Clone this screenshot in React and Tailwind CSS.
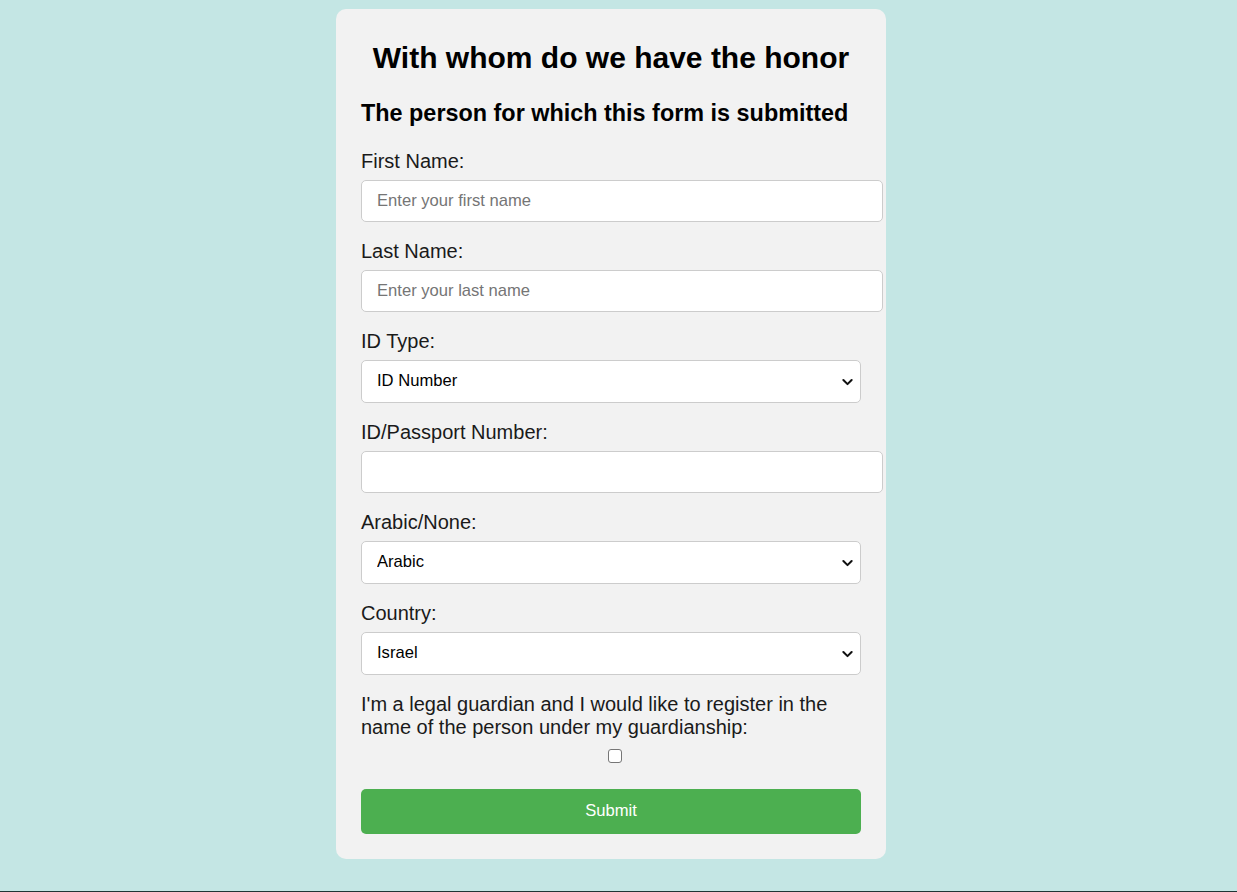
import React from 'react'

const Chevron = () => (
  <svg className="pointer-events-none absolute right-[8px] top-1/2 -translate-y-1/2 w-[11px] h-[11px]" viewBox="0 0 12 12" fill="none">
    <path d="M1.5 3.8l4.5 4.5 4.5-4.5" stroke="#111" strokeWidth={2.2} strokeLinecap="round" strokeLinejoin="round" />
  </svg>
)

const Label = ({ children }) => (
  <label className="block text-[20px] leading-[23px] text-[#1a1a1a] mb-[7px]">{children}</label>
)

const TextField = ({ label, placeholder }) => (
  <div>
    <Label>{label}</Label>
    <input
      type="text"
      placeholder={placeholder}
      className="block w-[522px] h-[42px] mb-[18px] pl-[15px] pr-[10px] bg-white border border-[#ccc] rounded-[5px] text-[16.6px] text-black placeholder:text-[#757575] outline-none"
    />
  </div>
)

const SelectField = ({ label, options }) => (
  <div>
    <Label>{label}</Label>
    <div className="relative w-[500px] mb-[18px]">
      <select className="block w-full h-[43px] pl-[15px] pr-[30px] bg-white border border-[#ccc] rounded-[5px] text-[16.6px] text-black appearance-none outline-none">
        {options.map(o => (
          <option key={o}>{o}</option>
        ))}
      </select>
      <Chevron />
    </div>
  </div>
)

export default function App() {
  return (
    <div className="h-[892px] bg-[#c4e6e4] flex flex-col font-['Liberation_Sans',Arial,sans-serif]">
      <div className="flex justify-center pr-[15px] pt-[9px]">
        <form
          className="w-[550px] bg-[#f2f2f2] rounded-[10px] px-[25px] pt-[25px] pb-[25px]"
          onSubmit={e => e.preventDefault()}
        >
          <h2 className="mt-[7px] text-[30px] leading-[34px] font-bold text-center text-black">
            With whom do we have the honor
          </h2>
          <h3 className="mt-[25px] mb-[23px] text-[23.4px] leading-[27px] font-bold text-black">
            The person for which this form is submitted
          </h3>

          <TextField label="First Name:" placeholder="Enter your first name" />
          <TextField label="Last Name:" placeholder="Enter your last name" />
          <SelectField label="ID Type:" options={['ID Number', 'Passport']} />
          <TextField label="ID/Passport Number:" placeholder="" />
          <SelectField label="Arabic/None:" options={['Arabic', 'None']} />
          <SelectField label="Country:" options={['Israel', 'Other']} />

          <p className="text-[20px] leading-[23px] text-[#1a1a1a]">
            I'm a legal guardian and I would like to register in the name of the person under my guardianship:
          </p>
          <div className="flex justify-center pl-[8px] mt-[10px] mb-[26px]">
            <input
              type="checkbox"
              className="appearance-none w-[14px] h-[14px] m-0 bg-white border border-[#767676] rounded-[3px]"
            />
          </div>

          <button
            type="submit"
            className="block w-[500px] h-[45px] bg-[#4caf50] text-white text-[16.6px] rounded-[5px]"
          >
            Submit
          </button>
        </form>
      </div>
      <div className="mt-auto h-px bg-[#1f3535]" />
    </div>
  )
}
